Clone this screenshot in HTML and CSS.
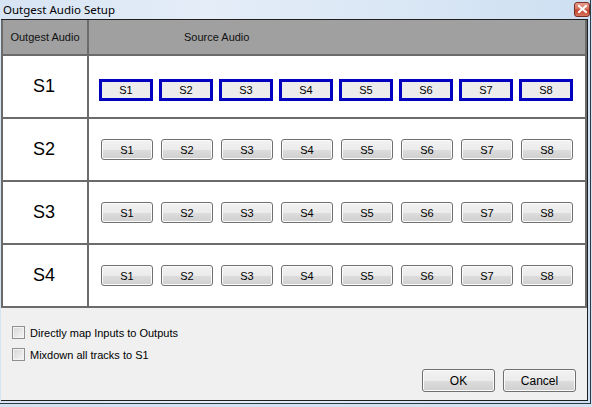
FILE: index.html
```html
<!DOCTYPE html>
<html>
<head>
<meta charset="utf-8">
<link rel="stylesheet" href="styles.css">
</head>
<body>
<div class="window">
  <div class="titlebar">
    <span class="title">Outgest Audio Setup</span>
    <div class="close"><svg width="9" height="8" viewBox="0 0 9 8"><path d="M1 1 L8 7 M8 1 L1 7" stroke="#ffffff" stroke-width="2.2" stroke-linecap="square"/></svg></div>
  </div>
  <div class="client">
    <div class="grid">
      <div class="hcell out">Outgest Audio</div>
      <div class="hcell src">Source Audio</div>

      <div class="label">S1</div>
      <div class="btns sel">
        <div class="sbtn">S1</div><div class="sbtn">S2</div><div class="sbtn">S3</div><div class="sbtn">S4</div><div class="sbtn">S5</div><div class="sbtn">S6</div><div class="sbtn">S7</div><div class="sbtn">S8</div>
      </div>

      <div class="label">S2</div>
      <div class="btns">
        <div class="btn">S1</div><div class="btn">S2</div><div class="btn">S3</div><div class="btn">S4</div><div class="btn">S5</div><div class="btn">S6</div><div class="btn">S7</div><div class="btn">S8</div>
      </div>

      <div class="label">S3</div>
      <div class="btns">
        <div class="btn">S1</div><div class="btn">S2</div><div class="btn">S3</div><div class="btn">S4</div><div class="btn">S5</div><div class="btn">S6</div><div class="btn">S7</div><div class="btn">S8</div>
      </div>

      <div class="label">S4</div>
      <div class="btns">
        <div class="btn">S1</div><div class="btn">S2</div><div class="btn">S3</div><div class="btn">S4</div><div class="btn">S5</div><div class="btn">S6</div><div class="btn">S7</div><div class="btn">S8</div>
      </div>
    </div>
    <div class="bottom">
      <div class="checks">
        <label class="check"><span class="box"></span>Directly map Inputs to Outputs</label>
        <label class="check"><span class="box"></span>Mixdown all tracks to S1</label>
      </div>
      <div class="actions">
        <div class="btn dlg">OK</div>
        <div class="btn dlg">Cancel</div>
      </div>
    </div>
  </div>
</div>
</body>
</html>
```

FILE: styles.css
```css
html, body {
  margin: 0;
  padding: 0;
}
body {
  width: 592px;
  height: 407px;
  background: #d3e1f0;
  overflow: hidden;
}
.window {
  width: 591px;
  height: 404px;
  box-sizing: border-box;
  border-right: 1px solid #2e3a46;
  border-bottom: 1px solid #2e3a46;
  background: linear-gradient(to right, #d7e4f3 0%, #e4edf8 35%, #d9e6f4 70%, #cddff2 100%);
  display: flex;
  flex-direction: column;
}
.titlebar {
  height: 19px;
  display: flex;
  align-items: center;
  justify-content: space-between;
  padding: 0 3px 0 3px;
  flex: none;
}
.title {
  font-family: "Noto Sans", "Open Sans", sans-serif;
  font-size: 11.5px;
  color: #000;
  line-height: 19px;
  margin-top: -1px;
}
.close {
  width: 14px;
  height: 13px;
  margin-top: -1px;
  margin-right: -3px;
  border: 1px solid #7a2d24;
  border-radius: 3px;
  background: linear-gradient(#e8a08f 0%, #d6715c 45%, #c1462f 55%, #d6765c 100%);
  display: flex;
  align-items: center;
  justify-content: center;
}
.client {
  margin-left: 1px;
  width: 587px;
  height: 382px;
  box-sizing: border-box;
  border-top: 1px solid #1f1f1f;
  border-right: 1px solid #1f1f1f;
  border-bottom: 1px solid #1f1f1f;
  background: #f0f0f0;
  display: flex;
  flex-direction: column;
}
.grid {
  display: grid;
  grid-template-columns: 84px 1fr;
  grid-template-rows: 34px repeat(4, 61px);
  gap: 2px;
  padding: 0 2px 2px 2px;
  background: #6b6b6b;
  font-family: "Liberation Sans", Arial, sans-serif;
}
.hcell {
  background: #a0a0a0;
  font-size: 11px;
  color: #111;
  display: flex;
  align-items: center;
}
.hcell.out {
  justify-content: center;
}
.hcell.src {
  padding-left: 95px;
}
.label {
  background: #fff;
  font-size: 18px;
  color: #000;
  display: flex;
  align-items: center;
  justify-content: center;
  padding-right: 2px;
}
.btns {
  background: #fff;
  display: flex;
  align-items: flex-start;
  padding: 20px 0 0 12px;
  gap: 8px;
}
.btns.sel {
  padding: 23px 0 0 10px;
  gap: 6px;
}
.btn {
  width: 52px;
  height: 21px;
  box-sizing: border-box;
  border: 1px solid #707070;
  border-radius: 3px;
  background: linear-gradient(#f2f2f2 0%, #ebebeb 50%, #dddddd 51%, #cfcfcf 100%);
  box-shadow: inset 0 0 0 1px #fbfbfb;
  font-family: "Liberation Sans", Arial, sans-serif;
  font-size: 11px;
  color: #000;
  display: flex;
  align-items: center;
  justify-content: center;
}
.sbtn {
  width: 54px;
  height: 22px;
  box-sizing: border-box;
  border: 3px solid #0000c0;
  background: #ececec;
  font-size: 11px;
  color: #000;
  display: flex;
  align-items: center;
  justify-content: center;
}
.bottom {
  flex: 1;
  display: flex;
  flex-direction: column;
  justify-content: space-between;
  padding: 18px 11px 8px 11px;
  font-family: "Liberation Sans", Arial, sans-serif;
  font-size: 11px;
}
.checks {
  display: flex;
  flex-direction: column;
  gap: 9px;
}
.check {
  display: flex;
  align-items: center;
  height: 13px;
  color: #000;
}
.box {
  width: 13px;
  height: 13px;
  box-sizing: border-box;
  border: 1px solid #8e8f8f;
  background: linear-gradient(135deg, #d6d6d6 0%, #f6f6f6 100%);
  box-shadow: inset 0 0 0 1px #f4f4f4;
  margin-right: 5px;
  flex: none;
}
.actions {
  display: flex;
  justify-content: flex-end;
  gap: 8px;
}
.btn.dlg {
  width: 73px;
  height: 23px;
  font-size: 12px;
}
```
